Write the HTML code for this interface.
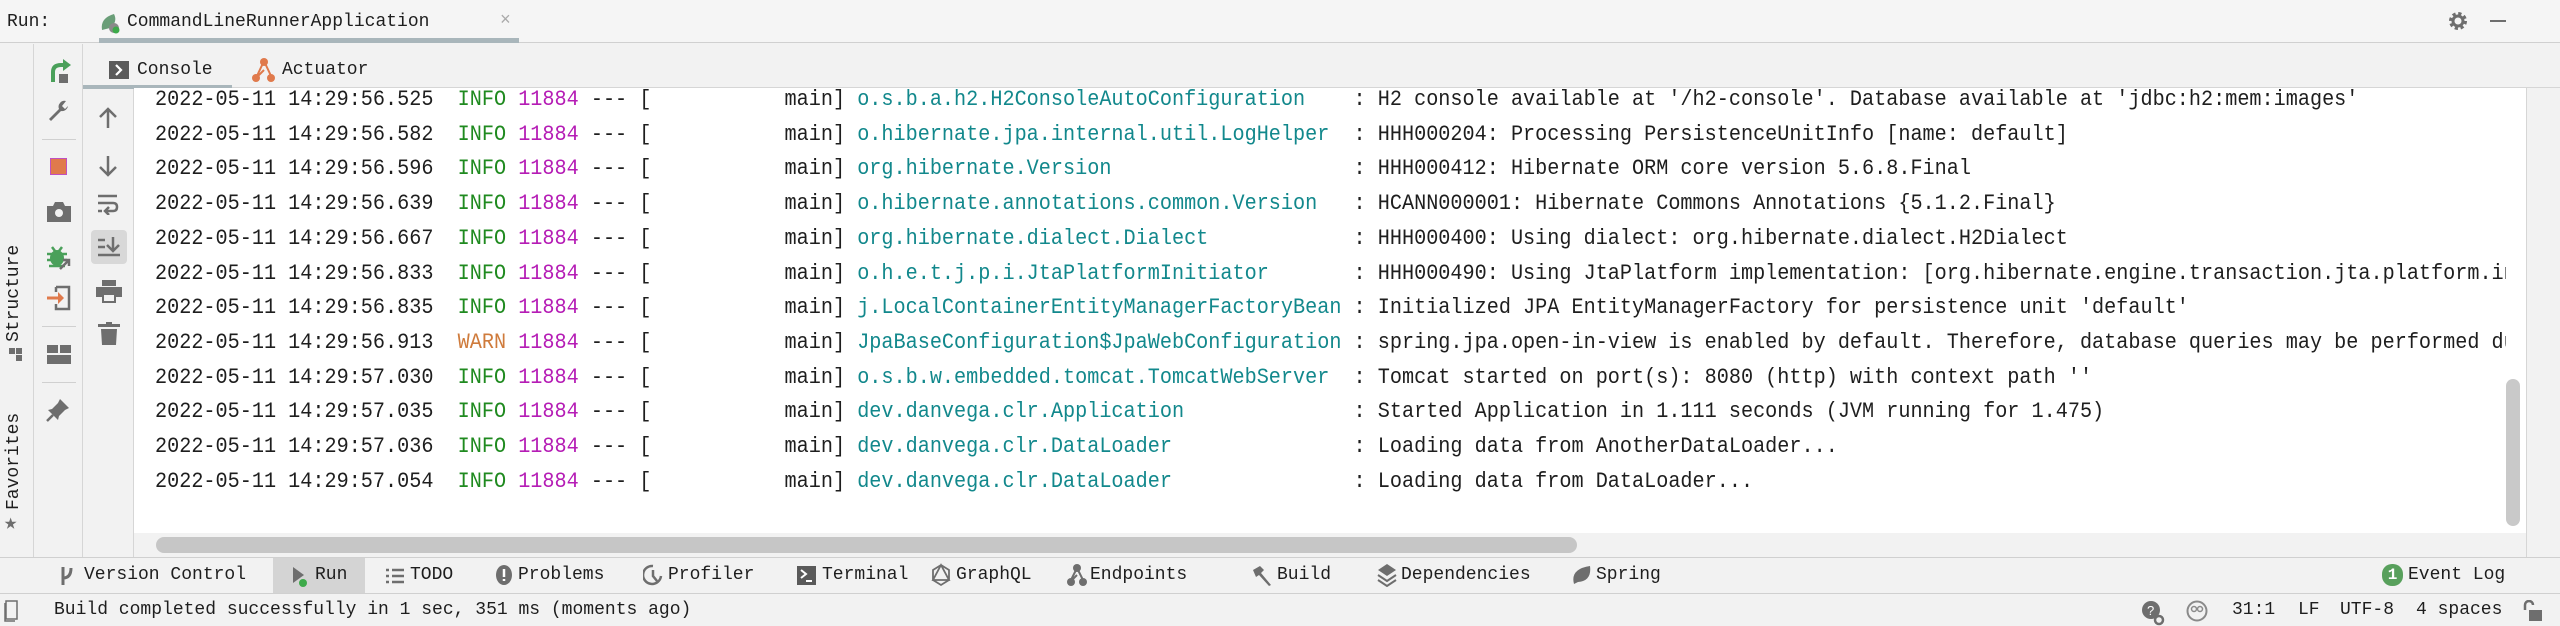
<!DOCTYPE html>
<html><head><meta charset="utf-8"><style>
*{margin:0;padding:0;box-sizing:border-box}
body{width:2560px;height:626px;overflow:hidden;background:#f2f2f2;font-family:"Liberation Mono",monospace;color:#1e1e1e;position:relative}
.a{position:absolute}
.ui{font-size:18px;line-height:20px;white-space:nowrap}
#top{left:0;top:0;width:2560px;height:43px;background:#f5f5f5;border-bottom:1px solid #d0d0d0}
#console{left:134px;top:88px;width:2393px;height:445px;background:#fff;overflow:hidden}
.row{position:absolute;left:21px;font-size:22px;line-height:34.7px;white-space:pre;height:34.7px;transform:scaleX(0.917);transform-origin:0 0}
.g{color:#1f8a1f}.m{color:#b51cb5}.t{color:#12888c}.w{color:#cf7b3c}
svg{position:absolute}
</style></head><body>
<div id="top" class="a"></div>
<div class="a ui" style="left:7px;top:12px">Run:</div>
<svg style="left:98px;top:10px" width="26" height="24" viewBox="0 0 26 24"><path d="M4 20 Q2 8 16 4 Q20 12 12 18 Z" fill="#6a9e78"/><circle cx="16" cy="18" r="5" fill="#8a8a8a"/><circle cx="18" cy="20" r="3.5" fill="#3daa4a"/></svg>
<div class="a ui" style="left:127px;top:12px">CommandLineRunnerApplication</div>
<div class="a ui" style="left:500px;top:11px;color:#aaa">×</div>
<div class="a" style="left:99px;top:38px;width:420px;height:5px;background:#a9b6bb"></div>
<svg style="left:2447px;top:10px" width="22" height="22" viewBox="0 0 22 22"><circle cx="11" cy="11" r="7" fill="none" stroke="#6e6e6e" stroke-width="4" stroke-dasharray="3 2.5"/><circle cx="11" cy="11" r="5" fill="none" stroke="#6e6e6e" stroke-width="3"/></svg>
<div class="a" style="left:2490px;top:20px;width:16px;height:2px;background:#6e6e6e"></div>

<div class="a" style="left:0;top:44px;width:34px;height:513px;background:#f2f2f2;border-right:1px solid #d6d6d6"></div>
<div class="a" style="left:34px;top:44px;width:49px;height:513px;background:#f2f2f2;border-right:1px solid #d6d6d6"></div>
<div class="a" style="left:83px;top:88px;width:51px;height:469px;background:#f2f2f2;border-right:1px solid #d6d6d6"></div>
<div class="a ui" style="left:4px;top:342px;transform-origin:0 0;transform:rotate(-90deg);width:100px">Structure</div>
<div class="a" style="left:9px;top:348px;width:6px;height:6px;background:#6e6e6e"></div><div class="a" style="left:16px;top:348px;width:6px;height:6px;background:#6e6e6e"></div><div class="a" style="left:16px;top:355px;width:6px;height:6px;background:#6e6e6e"></div>
<div class="a ui" style="left:4px;top:510px;transform-origin:0 0;transform:rotate(-90deg);width:110px">Favorites</div>
<div class="a" style="left:4px;top:510px;font-size:22px;color:#6e6e6e">★</div>
<svg style="left:45px;top:58px" width="28" height="28" viewBox="0 0 28 28"><path d="M8 24 V14 Q8 7 16 7 H20" fill="none" stroke="#4aa05a" stroke-width="4"/><path d="M18 1 L26 7 L18 13 Z" fill="#4aa05a"/><rect x="14" y="16" width="9" height="9" fill="#6e6e6e"/></svg>
<svg style="left:46px;top:98px" width="24" height="24" viewBox="0 0 24 24"><path d="M3 21 L13 11 A6 6 0 0 1 20 3 L16 8 L19 11 L22 8 A6 6 0 0 1 15 13 L5 23 Z" fill="#6e6e6e"/></svg>
<div class="a" style="left:42px;top:139px;width:34px;height:1px;background:#d0d0d0"></div>
<div class="a" style="left:50px;top:158px;width:17px;height:17px;background:#e07a4c;border:1px solid #c050c0"></div>
<svg style="left:46px;top:200px" width="26" height="24" viewBox="0 0 26 24"><path d="M1 6 H7 L9 2 H17 L19 6 H25 V22 H1 Z" fill="#6e6e6e"/><circle cx="13" cy="13" r="4" fill="#f2f2f2"/></svg>
<svg style="left:46px;top:245px" width="26" height="26" viewBox="0 0 26 26"><ellipse cx="11" cy="13" rx="7" ry="8" fill="#4aa05a"/><path d="M1 9 H21 M1 15 H21 M3 21 L19 21 M6 2 L9 6 M16 2 L13 6" stroke="#4aa05a" stroke-width="2.5"/><path d="M14 24 L23 15 M17 15 H23 V21" stroke="#6e6e6e" stroke-width="2.5" fill="none"/></svg>
<svg style="left:46px;top:285px" width="26" height="26" viewBox="0 0 26 26"><path d="M10 2 H23 V24 H10 V19 M10 7 V2" fill="none" stroke="#6e6e6e" stroke-width="2.5"/><path d="M1 13 H14" stroke="#e07a4c" stroke-width="3"/><path d="M12 7 L18 13 L12 19 Z" fill="#e07a4c"/></svg>
<div class="a" style="left:42px;top:326px;width:34px;height:1px;background:#d0d0d0"></div>
<svg style="left:47px;top:345px" width="24" height="20" viewBox="0 0 24 20"><rect x="0" y="0" width="11" height="8" fill="#6e6e6e"/><rect x="13" y="0" width="11" height="8" fill="#6e6e6e"/><rect x="0" y="10" width="24" height="9" fill="#6e6e6e"/></svg>
<div class="a" style="left:42px;top:382px;width:34px;height:1px;background:#d0d0d0"></div>
<svg style="left:46px;top:398px" width="24" height="24" viewBox="0 0 24 24"><path d="M14 1 L23 10 L19 12 L13 18 L12 22 L2 12 L6 11 L12 5 Z" fill="#6e6e6e"/><path d="M7 17 L1 23" stroke="#6e6e6e" stroke-width="2.5"/></svg>
<svg style="left:97px;top:106px" width="22" height="24" viewBox="0 0 22 24"><path d="M11 22 V3 M3 11 L11 3 L19 11" fill="none" stroke="#6e6e6e" stroke-width="2.5"/></svg>
<svg style="left:97px;top:154px" width="22" height="24" viewBox="0 0 22 24"><path d="M11 2 V21 M3 13 L11 21 L19 13" fill="none" stroke="#6e6e6e" stroke-width="2.5"/></svg>
<svg style="left:97px;top:193px" width="22" height="22" viewBox="0 0 22 22"><path d="M1 3 H20 M1 10 H16 Q20 10 20 14 Q20 18 16 18 H9 M1 18 H5 M12 14 L8 18 L12 22" fill="none" stroke="#6e6e6e" stroke-width="2.5"/></svg>
<div class="a" style="left:91px;top:230px;width:36px;height:34px;background:#d8d8d8;border-radius:4px"></div>
<svg style="left:97px;top:236px" width="24" height="22" viewBox="0 0 24 22"><path d="M1 4 H8 M1 11 H8 M1 19 H23 M16 1 V15 M10 9 L16 15 L22 9" fill="none" stroke="#6e6e6e" stroke-width="2.5"/></svg>
<svg style="left:96px;top:280px" width="26" height="24" viewBox="0 0 26 24"><rect x="6" y="0" width="14" height="6" fill="#6e6e6e"/><rect x="0" y="7" width="26" height="10" fill="#6e6e6e"/><rect x="7" y="14" width="12" height="8" fill="#f2f2f2" stroke="#6e6e6e" stroke-width="2"/></svg>
<svg style="left:98px;top:322px" width="22" height="24" viewBox="0 0 22 24"><rect x="0" y="2" width="22" height="3" fill="#6e6e6e"/><rect x="8" y="0" width="6" height="3" fill="#6e6e6e"/><path d="M3 7 H19 L18 23 H4 Z" fill="#6e6e6e"/></svg>

<div class="a" style="left:83px;top:44px;width:2477px;height:44px;background:#f2f2f2;border-bottom:1px solid #d6d6d6"></div>
<div class="a" style="left:83px;top:85px;width:149px;height:4px;background:#a9b6bb"></div>
<svg style="left:109px;top:61px" width="20" height="18" viewBox="0 0 20 18"><rect width="20" height="18" fill="#5a5a5a"/><path d="M7 4 L12 9 L7 14" stroke="#fff" stroke-width="2.2" fill="none"/></svg>
<div class="a ui" style="left:137px;top:60px">Console</div>
<svg style="left:251px;top:56px" width="26" height="28" viewBox="0 0 26 28"><path d="M13 5 L5 22 M13 5 L21 22 M5 22 L13 14" stroke="#e07a4c" stroke-width="2" fill="none"/><circle cx="13" cy="6" r="4" fill="#e07a4c"/><circle cx="5" cy="22" r="4" fill="#e07a4c"/><circle cx="20" cy="22" r="4" fill="#e07a4c"/></svg>
<div class="a ui" style="left:282px;top:60px">Actuator</div>

<div id="console" class="a">
<div class="row" style="top:-5px">2022-05-11 14:29:56.525  <span class="g">INFO</span> <span class="m">11884</span> --- [           main] <span class="t">o.s.b.a.h2.H2ConsoleAutoConfiguration   </span> : H2 console available at '/h2-console'. Database available at 'jdbc:h2:mem:images'</div>
<div class="row" style="top:29.7px">2022-05-11 14:29:56.582  <span class="g">INFO</span> <span class="m">11884</span> --- [           main] <span class="t">o.hibernate.jpa.internal.util.LogHelper </span> : HHH000204: Processing PersistenceUnitInfo [name: default]</div>
<div class="row" style="top:64.4px">2022-05-11 14:29:56.596  <span class="g">INFO</span> <span class="m">11884</span> --- [           main] <span class="t">org.hibernate.Version                   </span> : HHH000412: Hibernate ORM core version 5.6.8.Final</div>
<div class="row" style="top:99.1px">2022-05-11 14:29:56.639  <span class="g">INFO</span> <span class="m">11884</span> --- [           main] <span class="t">o.hibernate.annotations.common.Version  </span> : HCANN000001: Hibernate Commons Annotations {5.1.2.Final}</div>
<div class="row" style="top:133.8px">2022-05-11 14:29:56.667  <span class="g">INFO</span> <span class="m">11884</span> --- [           main] <span class="t">org.hibernate.dialect.Dialect           </span> : HHH000400: Using dialect: org.hibernate.dialect.H2Dialect</div>
<div class="row" style="top:168.5px">2022-05-11 14:29:56.833  <span class="g">INFO</span> <span class="m">11884</span> --- [           main] <span class="t">o.h.e.t.j.p.i.JtaPlatformInitiator      </span> : HHH000490: Using JtaPlatform implementation: [org.hibernate.engine.transaction.jta.platform.internal.NoJtaPlatform]</div>
<div class="row" style="top:203.2px">2022-05-11 14:29:56.835  <span class="g">INFO</span> <span class="m">11884</span> --- [           main] <span class="t">j.LocalContainerEntityManagerFactoryBean</span> : Initialized JPA EntityManagerFactory for persistence unit 'default'</div>
<div class="row" style="top:237.9px">2022-05-11 14:29:56.913  <span class="w">WARN</span> <span class="m">11884</span> --- [           main] <span class="t">JpaBaseConfiguration$JpaWebConfiguration</span> : spring.jpa.open-in-view is enabled by default. Therefore, database queries may be performed during view rendering.</div>
<div class="row" style="top:272.6px">2022-05-11 14:29:57.030  <span class="g">INFO</span> <span class="m">11884</span> --- [           main] <span class="t">o.s.b.w.embedded.tomcat.TomcatWebServer </span> : Tomcat started on port(s): 8080 (http) with context path ''</div>
<div class="row" style="top:307.3px">2022-05-11 14:29:57.035  <span class="g">INFO</span> <span class="m">11884</span> --- [           main] <span class="t">dev.danvega.clr.Application             </span> : Started Application in 1.111 seconds (JVM running for 1.475)</div>
<div class="row" style="top:342px">2022-05-11 14:29:57.036  <span class="g">INFO</span> <span class="m">11884</span> --- [           main] <span class="t">dev.danvega.clr.DataLoader              </span> : Loading data from AnotherDataLoader...</div>
<div class="row" style="top:376.7px">2022-05-11 14:29:57.054  <span class="g">INFO</span> <span class="m">11884</span> --- [           main] <span class="t">dev.danvega.clr.DataLoader              </span> : Loading data from DataLoader...</div>
<div class="a" style="left:2372px;top:0;width:21px;height:445px;background:#fff"></div>
<div class="a" style="left:2372px;top:291px;width:14px;height:147px;background:#c9c9c9;border-radius:7px"></div>
</div>
<div class="a" style="left:2526px;top:88px;width:1px;height:469px;background:#d6d6d6"></div>
<div class="a" style="left:156px;top:537px;width:1421px;height:16px;background:#c6c6c6;border-radius:8px"></div>

<div class="a" style="left:0;top:557px;width:2560px;height:1px;background:#d0d0d0"></div>
<div class="a" style="left:273px;top:558px;width:92px;height:35px;background:#d4d4d4"></div>
<div class="a" style="left:0;top:593px;width:2560px;height:1px;background:#d0d0d0"></div>
<svg style="left:60px;top:566px" width="14" height="20" viewBox="0 0 14 20"><path d="M3 1 V19 M3 12 Q11 12 11 2" stroke="#6e6e6e" stroke-width="3" fill="none"/></svg>
<div class="a ui" style="left:84px;top:565px">Version Control</div>
<svg style="left:292px;top:566px" width="16" height="22" viewBox="0 0 16 22"><path d="M1 1 L12 9 L1 17 Z" fill="#6e6e6e"/><circle cx="11" cy="17" r="4" fill="#3daa4a"/></svg>
<div class="a ui" style="left:315px;top:565px">Run</div>
<svg style="left:386px;top:568px" width="18" height="16" viewBox="0 0 18 16"><path d="M0 2 H3 M6 2 H18 M0 8 H3 M6 8 H18 M0 14 H3 M6 14 H18" stroke="#6e6e6e" stroke-width="2.5"/></svg>
<div class="a ui" style="left:410px;top:565px">TODO</div>
<svg style="left:496px;top:565px" width="16" height="20" viewBox="0 0 16 20"><ellipse cx="8" cy="10" rx="8" ry="10" fill="#6e6e6e"/><path d="M8 4 V12 M8 14 V16" stroke="#fff" stroke-width="2.5"/></svg>
<div class="a ui" style="left:518px;top:565px">Problems</div>
<svg style="left:643px;top:564px" width="20" height="24" viewBox="0 0 20 24"><path d="M10 2 A9 9 0 1 0 18 12" stroke="#6e6e6e" stroke-width="2.5" fill="none"/><path d="M10 6 V12 L14 17" stroke="#6e6e6e" stroke-width="2.5" fill="none"/></svg>
<div class="a ui" style="left:668px;top:565px">Profiler</div>
<svg style="left:797px;top:566px" width="19" height="19" viewBox="0 0 19 19"><rect width="19" height="19" fill="#5a5a5a"/><path d="M4 4 L9 8 L4 12 M9 15 H15" stroke="#fff" stroke-width="2" fill="none"/></svg>
<div class="a ui" style="left:822px;top:565px">Terminal</div>
<svg style="left:931px;top:563px" width="20" height="24" viewBox="0 0 20 24"><path d="M10 2 L18 7 V17 L10 22 L2 17 V7 Z M10 2 L2 17 H18 Z" stroke="#6e6e6e" stroke-width="1.8" fill="none"/></svg>
<div class="a ui" style="left:956px;top:565px">GraphQL</div>
<svg style="left:1066px;top:563px" width="22" height="24" viewBox="0 0 22 24"><path d="M11 5 L4 19 M11 5 L18 19 M4 19 L11 12" stroke="#6e6e6e" stroke-width="2" fill="none"/><circle cx="11" cy="5" r="4" fill="#6e6e6e"/><circle cx="5" cy="19" r="4" fill="#6e6e6e"/><circle cx="17" cy="19" r="4" fill="#6e6e6e"/></svg>
<div class="a ui" style="left:1090px;top:565px">Endpoints</div>
<svg style="left:1252px;top:565px" width="20" height="22" viewBox="0 0 20 22"><path d="M1 5 L8 1 L12 5 L9 8 L19 20 L17 21 L7 10 L4 12 Z" fill="#6e6e6e"/></svg>
<div class="a ui" style="left:1277px;top:565px">Build</div>
<svg style="left:1377px;top:563px" width="20" height="24" viewBox="0 0 20 24"><path d="M10 1 L19 7 L10 13 L1 7 Z" fill="#6e6e6e"/><path d="M1 12 L10 18 L19 12 M1 17 L10 23 L19 17" stroke="#6e6e6e" stroke-width="2" fill="none"/></svg>
<div class="a ui" style="left:1401px;top:565px">Dependencies</div>
<svg style="left:1572px;top:565px" width="20" height="20" viewBox="0 0 20 20"><path d="M2 19 Q-2 4 18 1 Q20 16 6 17 Z" fill="#6e6e6e"/></svg>
<div class="a ui" style="left:1596px;top:565px">Spring</div>
<div class="a" style="left:2382px;top:564px;width:21px;height:22px;background:#58a05c;border-radius:10px;color:#fff;font-size:16px;font-weight:bold;text-align:center;line-height:22px">1</div>
<div class="a ui" style="left:2408px;top:565px">Event Log</div>

<svg style="left:4px;top:600px" width="14" height="22" viewBox="0 0 14 22"><rect x="2" y="1" width="11" height="18" fill="none" stroke="#6e6e6e" stroke-width="1.5"/><path d="M1 3 V21 H11" stroke="#6e6e6e" stroke-width="1.5" fill="none"/></svg>
<div class="a ui" style="left:54px;top:600px">Build completed successfully in 1 sec, 351 ms (moments ago)</div>
<svg style="left:2141px;top:600px" width="26" height="26" viewBox="0 0 26 26"><circle cx="10" cy="10" r="9" fill="#6e6e6e"/><text x="6" y="15" font-size="13" fill="#fff" font-family="Liberation Sans">?</text><circle cx="18" cy="20" r="4" fill="none" stroke="#6e6e6e" stroke-width="2.5"/></svg>
<svg style="left:2186px;top:600px" width="22" height="22" viewBox="0 0 22 22"><circle cx="11" cy="11" r="9.5" fill="none" stroke="#8a8a8a" stroke-width="2"/><circle cx="8" cy="9" r="2.5" fill="none" stroke="#8a8a8a" stroke-width="1.5"/><circle cx="14" cy="9" r="2.5" fill="none" stroke="#8a8a8a" stroke-width="1.5"/></svg>
<div class="a ui" style="left:2232px;top:600px">31:1</div>
<div class="a ui" style="left:2298px;top:600px">LF</div>
<div class="a ui" style="left:2340px;top:600px">UTF-8</div>
<div class="a ui" style="left:2416px;top:600px">4 spaces</div>
<svg style="left:2522px;top:600px" width="22" height="22" viewBox="0 0 22 22"><path d="M3 10 V5 A4 4 0 0 1 11 5" stroke="#6e6e6e" stroke-width="2.5" fill="none"/><rect x="7" y="10" width="13" height="11" fill="#6e6e6e"/></svg>
</body></html>
